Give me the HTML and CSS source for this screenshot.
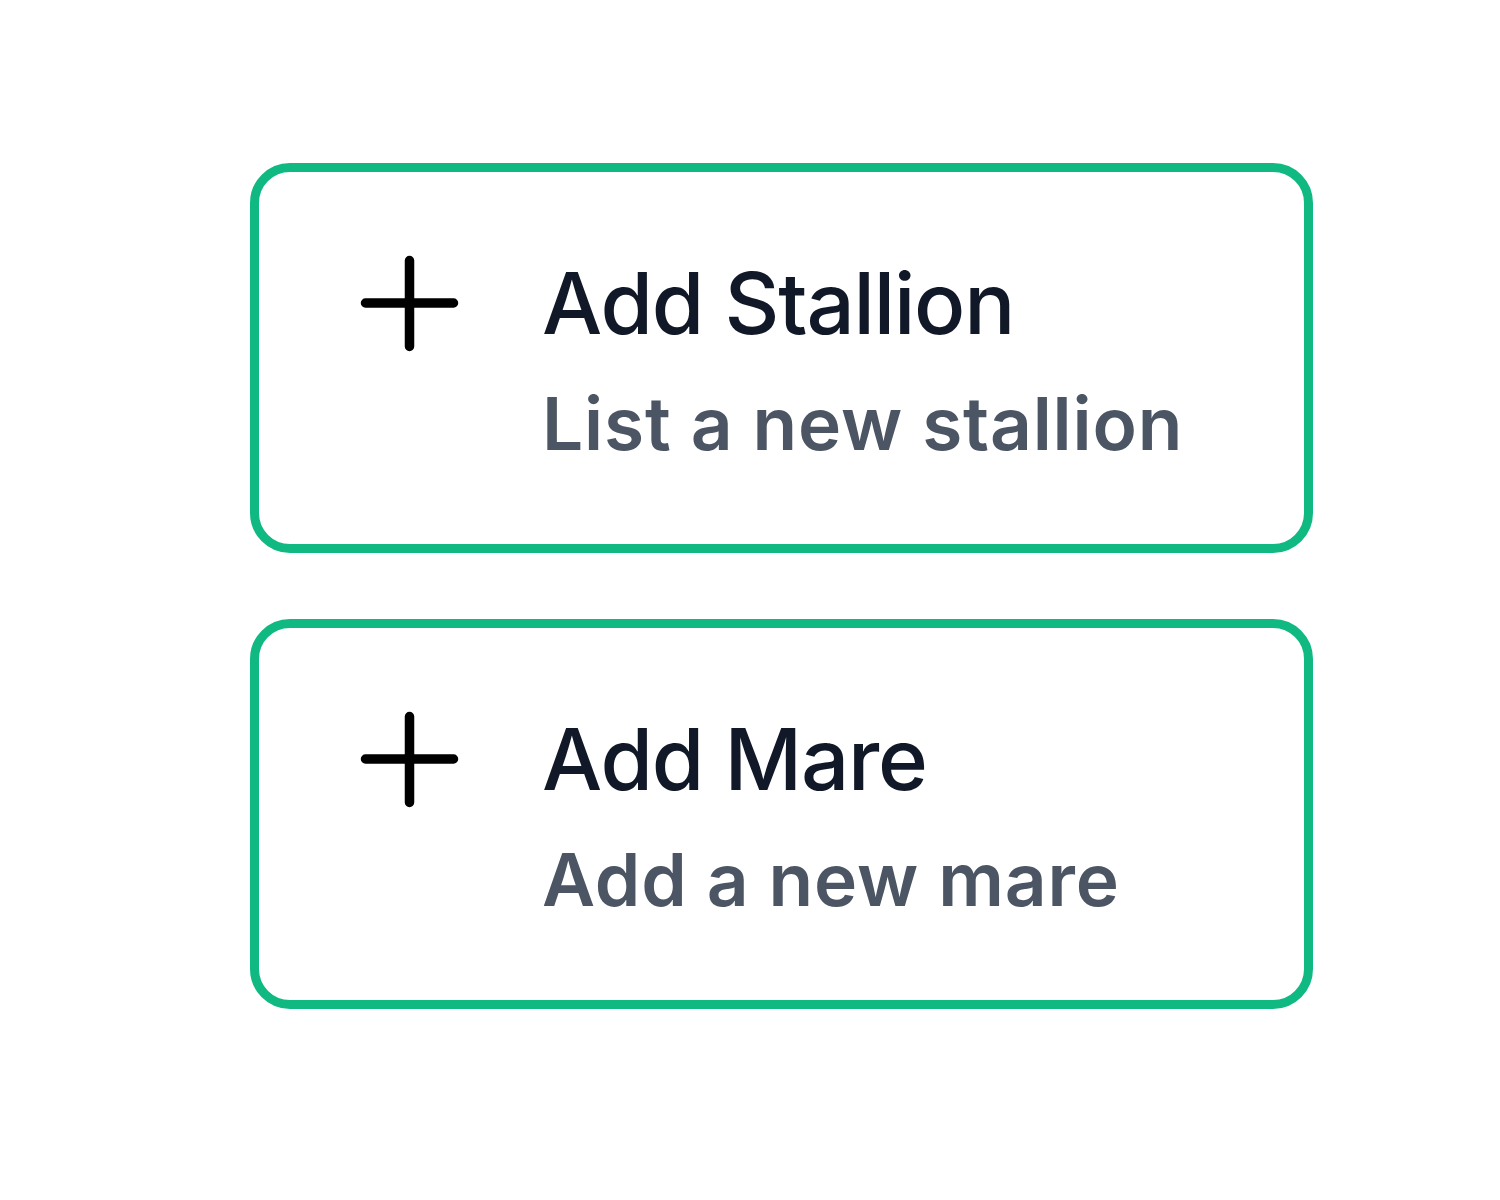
FILE: index.html
```html
<!DOCTYPE html>
<html lang="en">
<head>
    <meta charset="UTF-8">
    <meta name="viewport" content="width=device-width, initial-scale=1.0">
    <title>Add Horse</title>
    <link rel="stylesheet" href="styles.css">
</head>
<body>
    <div class="actions">
        <!-- Stallion -->
        <a class="action-card" href="#">
            <svg class="plus-icon" viewBox="0 0 100 100" aria-hidden="true">
                <path d="M50.5 7.5v86M6.5 50h88" />
            </svg>
            <div class="action-text">
                <div class="action-title">Add Stallion</div>
                <div class="action-sub">List a new stallion</div>
            </div>
        </a>

        <!-- Mare -->
        <a class="action-card" href="#">
            <svg class="plus-icon" viewBox="0 0 100 100" aria-hidden="true">
                <path d="M50.5 7.5v86M6.5 50h88" />
            </svg>
            <div class="action-text">
                <div class="action-title">Add Mare</div>
                <div class="action-sub">Add a new mare</div>
            </div>
        </a>
    </div>
</body>
</html>
```

FILE: styles.css
```css
body {
    margin: 0;
    background-color: #fff;
    font-family: 'Inter', 'Noto Sans', sans-serif;
}

.actions {
    display: flex;
    flex-direction: column;
    gap: 66px;
    width: 1063px;
    margin-left: 250px;
    padding-top: 163px;
}

.action-card {
    display: flex;
    align-items: flex-start;
    gap: 83px;
    padding: 81px 40px 76px 100px;
    border: 9px solid #10b981;
    border-radius: 40px;
    text-decoration: none;
}

.plus-icon {
    width: 100px;
    height: 100px;
    flex-shrink: 0;
    fill: none;
    stroke: #000;
    stroke-width: 9.5;
    stroke-linecap: round;
}

.action-title {
    font-size: 85px;
    line-height: 102px;
    font-weight: 500;
    letter-spacing: -1.2px;
    color: #111827;
}

.action-sub {
    margin-top: 25px;
    font-size: 73px;
    line-height: 88px;
    font-weight: 600;
    letter-spacing: 0.8px;
    color: #4b5563;
}
```
